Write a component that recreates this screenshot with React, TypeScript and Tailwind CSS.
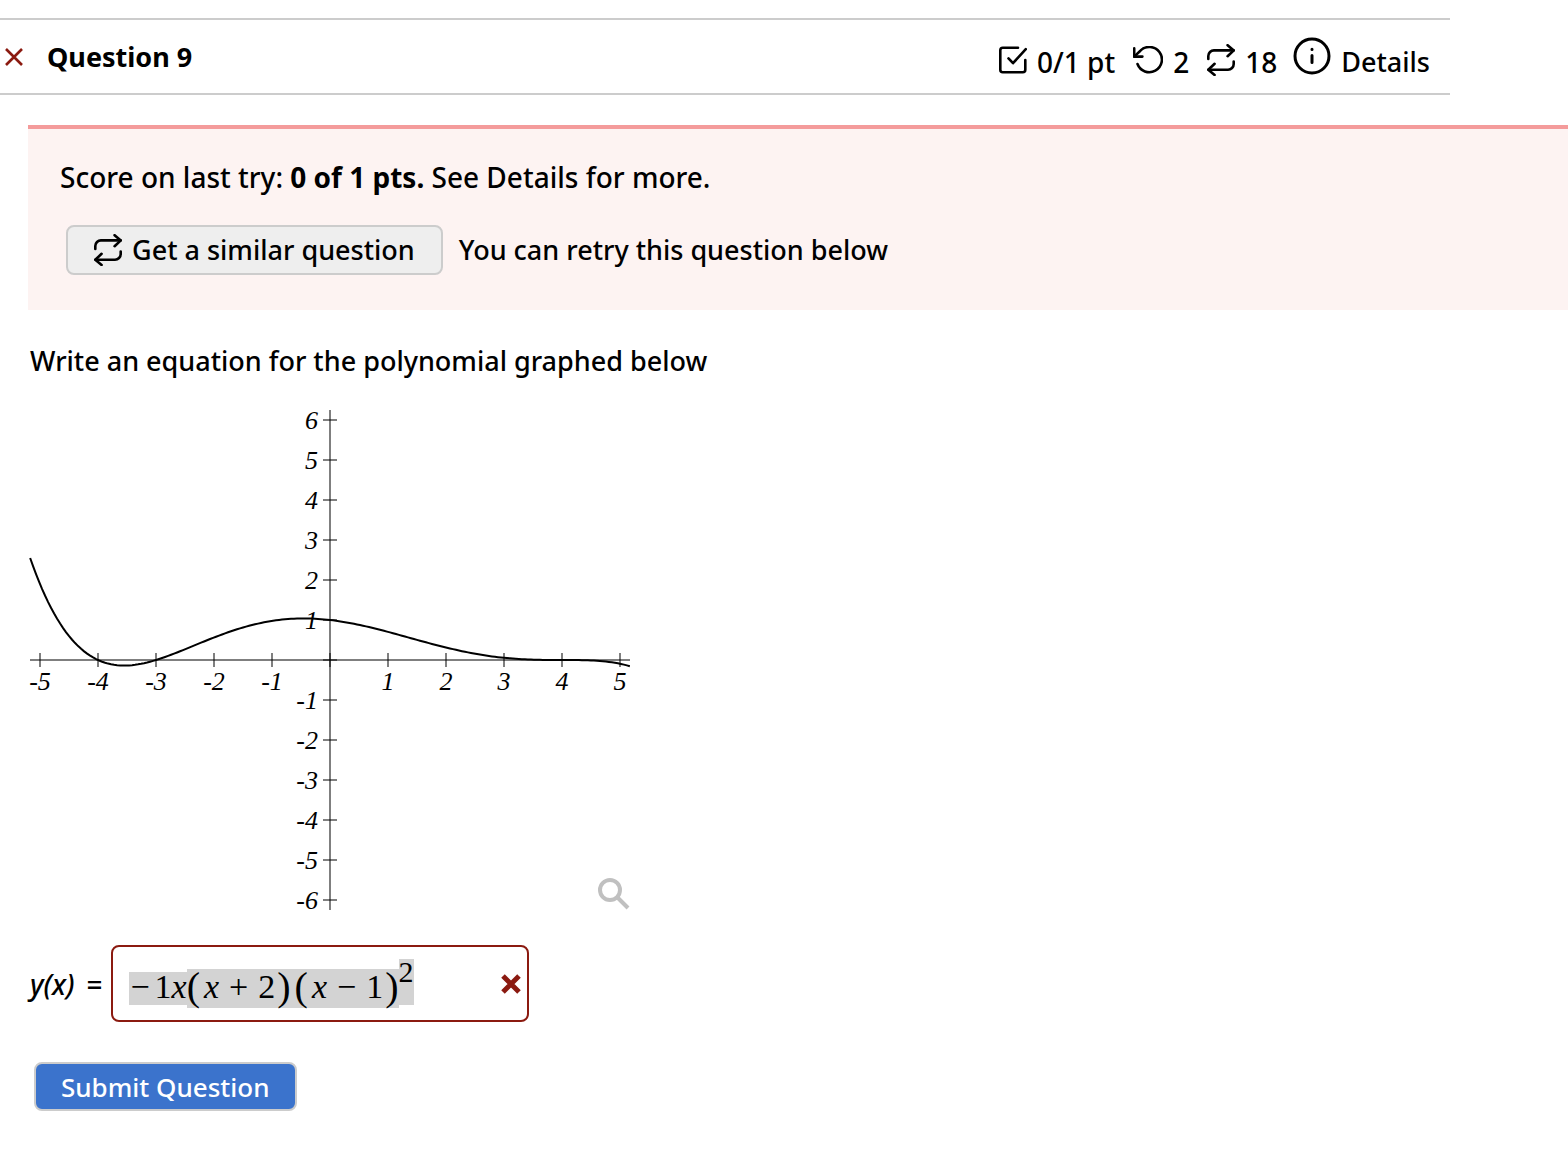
import type { ReactNode } from "react";

const RepeatIcon = () => (
  <svg className="w-7 h-8 shrink-0" viewBox="0 0 28 32" fill="none" stroke="currentColor" strokeWidth="2.6" strokeLinecap="round" strokeLinejoin="round" aria-hidden="true">
    <path d="M1.3 15V12A5.7 5.7 0 0 1 7 6.4H26.5" />
    <path d="M20.6 1.2L26.8 6.4L20.6 12.2" />
    <path d="M26.7 17.5V20A5.7 5.7 0 0 1 21 25.7H1.5" />
    <path d="M7.6 19.8L1.3 25.7L7.6 30.9" />
  </svg>
);

const CheckIcon = () => (
  <svg className="w-7 h-7 shrink-0" viewBox="0 0 28 28" fill="none" stroke="currentColor" strokeWidth="2.6" strokeLinecap="round" strokeLinejoin="round" aria-hidden="true">
    <path d="M19 1.7H3.8A2.5 2.5 0 0 0 1.3 4.2V23.8A2.5 2.5 0 0 0 3.8 26.3H23.8A2.5 2.5 0 0 0 26.3 23.8V14" />
    <path d="M9.5 12.4L14 17.2L26.8 3.2" />
  </svg>
);

const UndoIcon = () => (
  <svg className="w-[30px] h-7 shrink-0" viewBox="0 0 30 28" fill="none" stroke="currentColor" strokeWidth="2.6" strokeLinecap="round" strokeLinejoin="round" aria-hidden="true">
    <path d="M1.2 2.4V10.6H9.4" />
    <path d="M1.2 10.6L7.4 4.7A12.6 12.6 0 1 1 4.5 18" />
  </svg>
);

const InfoIcon = () => (
  <svg className="w-[38px] h-[38px] shrink-0" viewBox="0 0 38 38" fill="none" stroke="currentColor" strokeWidth="3" strokeLinecap="round" aria-hidden="true">
    <circle cx="19" cy="19" r="17" />
    <path d="M19 18.5V25.5M19 12.3V12.4" />
  </svg>
);

const Cross = ({ width }: { width: number }) => (
  <svg className="w-5 h-5 shrink-0 text-[#8b1a10]" viewBox="0 0 20 20" fill="none" stroke="currentColor" strokeWidth={width} role="img" aria-label="Incorrect">
    <path d="M2 2L18 18M18 2L2 18" />
  </svg>
);

// plot is 600x500, origin at (300, 250), 58px per x unit and 40px per y unit
const toX = (x: number) => 300 + x * 58;
const toY = (y: number) => 250 - y * 40;
const f = (x: number) => -((x + 4) * (x + 3) * (x - 4) ** 3) / 768;

const curve = Array.from({ length: 201 }, (_, i) => {
  const x = -5.17 + (i * 10.34) / 200;
  return `${toX(x).toFixed(2)},${toY(f(x)).toFixed(2)}`;
}).join(" ");

const xTicks = [-5, -4, -3, -2, -1, 0, 1, 2, 3, 4, 5];
const yTicks = [-6, -5, -4, -3, -2, -1, 0, 1, 2, 3, 4, 5, 6];

const Graph = () => (
  <svg className="block w-full overflow-visible" viewBox="0 0 600 500" role="img" aria-label="Graph of a polynomial">
    <g stroke="black" strokeOpacity="0.5" strokeWidth="2">
      <path d="M0 250H600" />
      <path d="M300 0V500" />
      {xTicks.map((x) => (
        <path key={x} d={`M${toX(x)} 243V257`} />
      ))}
      {yTicks.map((y) => (
        <path key={y} d={`M293 ${toY(y)}H307`} />
      ))}
    </g>
    <g className="italic text-[26px] leading-none font-['Liberation_Serif',serif]">
      {xTicks.filter(Boolean).map((x) => (
        <text key={x} x={toX(x)} y="280" textAnchor="middle">{x}</text>
      ))}
      {yTicks.filter(Boolean).map((y) => (
        <text key={y} x="288" y={toY(y) + 9} textAnchor="end">{y}</text>
      ))}
    </g>
    <polyline points={curve} fill="none" stroke="black" strokeWidth="2" />
  </svg>
);

const Paren = ({ children }: { children: ReactNode }) => (
  <>
    <span className="text-[40px]">(</span>
    {children}
    <span className="text-[40px]">)</span>
  </>
);

const Answer = () => (
  <div
    id="answer"
    role="textbox"
    tabIndex={0}
    aria-labelledby="answer-label"
    className="flex items-center justify-between w-[418px] h-[77px] pl-4 pr-1.5 border-2 border-[#8b1a10] rounded-lg outline-none"
  >
    <div className="flex items-end text-[34px] font-normal whitespace-nowrap font-['Liberation_Serif',serif]">
      <span className="flex h-[33px] mb-[3px] pl-0.5 leading-[29px] bg-[#d3d3d3]">
        <span className="w-6">−</span>1<i>x</i>
      </span>
      <span className="flex h-[39px] leading-[35px] bg-[#d3d3d3]">
        <Paren>
          <i className="pl-1">x</i>
          <span className="px-2.5">+</span>
          <span className="pr-0.5">2</span>
        </Paren>
        <span className="w-1" />
        <Paren>
          <i className="pl-1">x</i>
          <span className="px-2.5">−</span>
          <span className="pr-0.5">1</span>
        </Paren>
      </span>
      <sup className="static h-[46px] mb-[3px] text-[30px] leading-[26px] bg-[#d3d3d3]">2</sup>
    </div>
    <Cross width={5} />
  </div>
);

const App = () => {
  return (
    <div className="min-h-screen pt-[18px] bg-white text-black text-[27px] leading-9 font-medium font-['Noto_Sans',sans-serif]">
      <header className="flex items-center justify-between mr-[118px] h-[77px] pl-1 pr-5 border-y-2 border-[#ccc]">
        <div className="flex items-center gap-[23px]">
          <Cross width={2.6} />
          <h1 className="font-bold">Question 9</h1>
        </div>
        <div className="flex items-center pt-1.5 text-[28px]">
          <CheckIcon />
          <span className="pt-1 pl-2.5 pr-[18px]">0/1 pt</span>
          <UndoIcon />
          <span className="pt-1 pl-2.5 pr-[18px]">2</span>
          <RepeatIcon />
          <span className="pt-1 pl-2.5 pr-4">18</span>
          <button type="button" className="flex items-center gap-2.5 text-[27px]">
            <span className="pb-2"><InfoIcon /></span>
            <span className="pt-1">Details</span>
          </button>
        </div>
      </header>

      <section className="ml-7 mt-[30px] pt-[30px] pb-[35px] px-8 bg-[#fdf3f2] border-t-4 border-[#f49b9b]">
        <p className="text-[28px]">
          Score on last try: <strong className="font-bold">0 of 1 pts.</strong> See Details for more.
        </p>
        <div className="flex items-center gap-4 mt-[30px] pl-1.5">
          <button type="button" className="flex items-center gap-2.5 h-[50px] px-[26px] bg-[#eee] border-2 border-[#ccc] rounded-lg">
            <RepeatIcon />
            Get a similar question
          </button>
          <span>You can retry this question below</span>
        </div>
      </section>

      <main className="ml-[30px] mt-[33px]">
        <p>Write an equation for the polynomial graphed below</p>
        <div className="relative w-[600px] max-w-full mt-[31px]">
          <Graph />
          <button type="button" aria-label="Enlarge graph" className="absolute right-0 bottom-0 text-[#c0c0c0]">
            <svg className="w-8 h-8" viewBox="0 0 32 32" fill="none" stroke="currentColor" strokeWidth="4">
              <circle cx="12" cy="12" r="10" />
              <path d="M19 19L30 30" />
            </svg>
          </button>
        </div>
        <div className="flex items-center gap-2 mt-[35px]">
          <span id="answer-label" className="flex gap-3 text-[28px]">
            <i>y(x)</i>
            <span>=</span>
          </span>
          <Answer />
        </div>
        <button type="button" className="mt-10 ml-1 h-[49px] px-[25px] bg-[#3b73cc] border-2 border-[#ccc] rounded-lg text-white text-[26px]">
          Submit Question
        </button>
      </main>
    </div>
  );
};

export default App;
